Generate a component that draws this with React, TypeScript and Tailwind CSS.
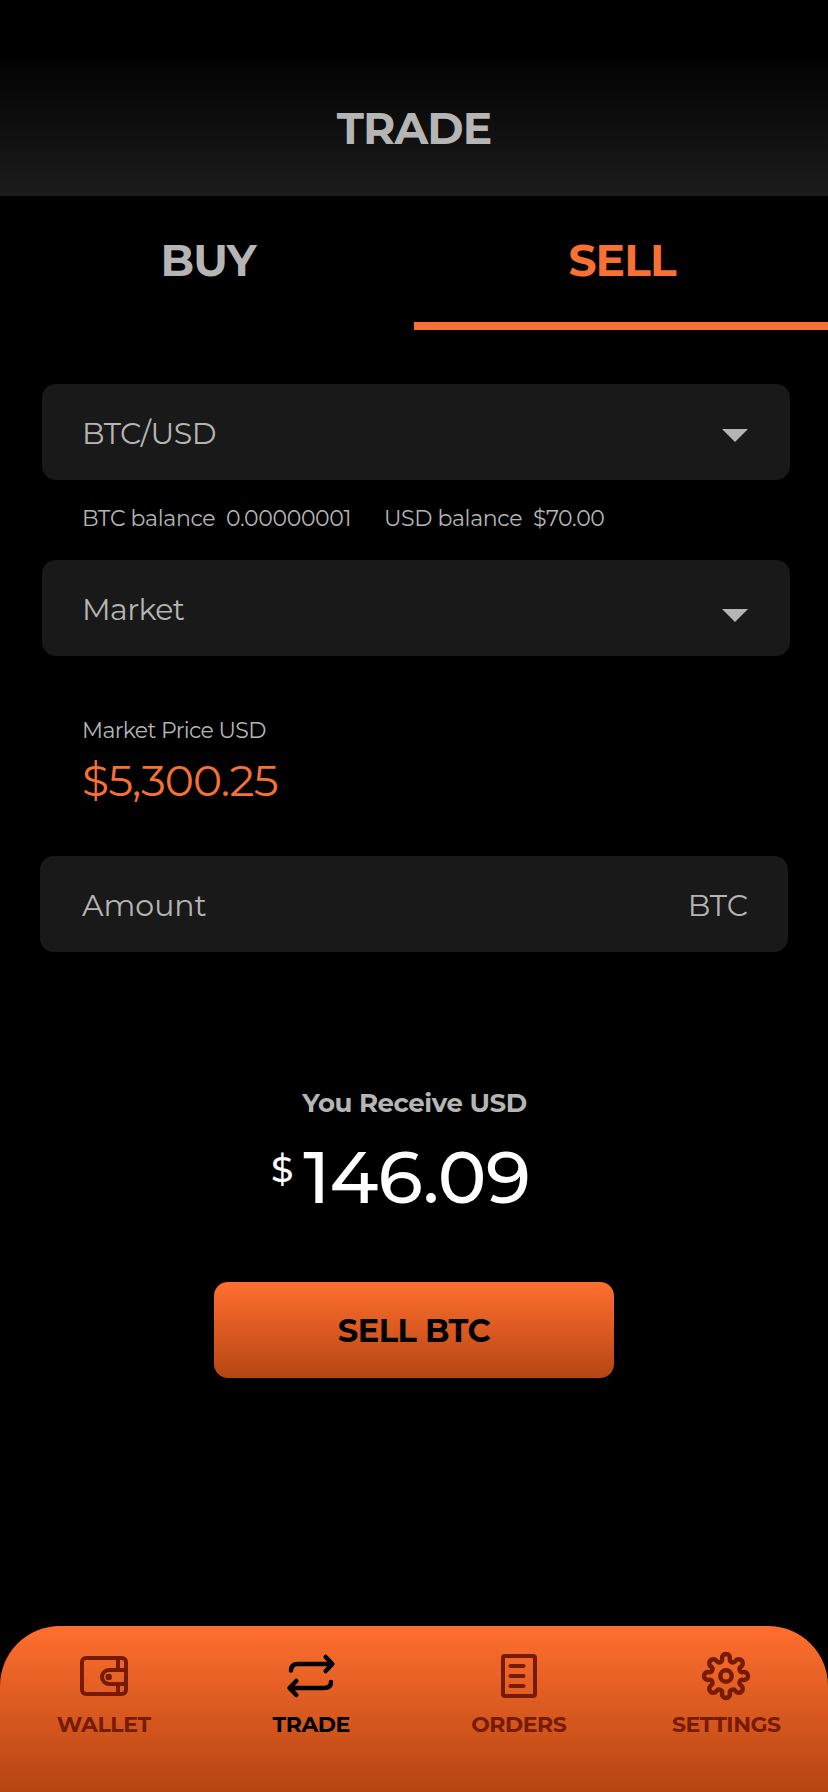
import { useState } from "react"
import type { ReactNode } from "react"

// Outline of the cog: eight round teeth joined by small concave arcs
const COG_PATH =
  Array.from({ length: 8 }, (_, i) => {
    const point = (deg: number) => {
      const a = (deg * Math.PI) / 180
      return `${(24 + 17.66 * Math.cos(a)).toFixed(2)} ${(24 + 17.66 * Math.sin(a)).toFixed(2)}`
    }
    const start = i * 45 - 12.83
    const end = i * 45 + 12.83
    return `${i === 0 ? `M${point(start)}` : ""}A4 4 0 1 1 ${point(end)}A3.02 3.02 0 0 0 ${point(start + 45)}`
  }).join("") + "Z"

const WalletIcon = (
  <>
    <rect x="2" y="6" width="44" height="36" rx="4" />
    <path d="M38 6v12M38 32v10M46 18H29a7 7 0 0 0 0 14h17" />
    <circle cx="28.7" cy="25" r="3.2" fill="currentColor" stroke="none" />
  </>
)

const TradeIcon = (
  <g strokeWidth="4.5">
    <path d="M4 18.500c0-4.500 2.500-6.500 7-6.500H45M38.700 5L45.300 12l-6.600 7" />
    <path d="M44 30c0 4-2.500 6-7 6H3M9.300 29L2.500 36l6.800 7" />
  </g>
)

const OrdersIcon = (
  <>
    <rect x="8" y="4" width="32" height="40" rx="2" />
    <path d="M15.500 14h13M15.500 24h13M15.500 34h13" />
  </>
)

const SettingsIcon = (
  <g strokeWidth="4.5">
    <path d={COG_PATH} />
    <circle cx="24" cy="24" r="5.7" />
  </g>
)

const NAV_ITEMS: { label: string; icon: ReactNode }[] = [
  { label: "WALLET", icon: WalletIcon },
  { label: "TRADE", icon: TradeIcon },
  { label: "ORDERS", icon: OrdersIcon },
  { label: "SETTINGS", icon: SettingsIcon },
]

function Caret({ className }: { className: string }) {
  return (
    <svg width="26" height="13" viewBox="0 0 26 13" className={className}>
      <path d="M0 0h26L13 13z" fill="#b5b5b5" />
    </svg>
  )
}

function Field({ className = "", children }: { className?: string; children: ReactNode }) {
  return (
    <div
      className={`flex h-24 w-[748px] items-center justify-between rounded-[14px] bg-[#191919] pt-1 text-[30px] ${className}`}
    >
      {children}
    </div>
  )
}

export default function App() {
  const [side, setSide] = useState("SELL")
  const [active, setActive] = useState("TRADE")

  return (
    <div className="flex h-[1792px] w-[828px] flex-col overflow-hidden bg-black font-['Montserrat','Inter',sans-serif] leading-none whitespace-nowrap text-[#b5b5b5]">
      <header className="flex h-[196px] shrink-0 items-center justify-center bg-linear-to-b/srgb from-black from-25% to-[#1c1c1c] pt-[60px]">
        <h1 className="text-[44px] font-bold tracking-[-0.02em]">TRADE</h1>
      </header>

      <div className="grid h-[134px] shrink-0 grid-cols-2">
        {["BUY", "SELL"].map((tab) => (
          <button
            key={tab}
            onClick={() => setSide(tab)}
            className={`border-b-8 pt-[2px] pl-[2px] text-[44px] font-bold tracking-[-0.02em] ${
              side === tab ? "border-[#f77133] text-[#f77133]" : "border-transparent"
            }`}
          >
            {tab}
          </button>
        ))}
      </div>

      <main className="flex flex-col pt-[54px] pl-[42px]">
        <Field className="pr-[42px] pl-10 tracking-[-0.016em]">
          <span>BTC/USD</span>
          <Caret className="mt-[3px]" />
        </Field>

        <div className="flex h-20 items-center pb-[2px] pl-10 text-[22px] tracking-[-0.016em]">
          <span className="w-[144px]">BTC balance</span>
          <span className="w-[158px]">0.00000001</span>
          <span className="w-[149px]">USD balance</span>
          <span>$70.00</span>
        </div>

        <Field className="pr-[42px] pl-10 tracking-[-0.018em]">
          <span>Market</span>
          <Caret className="mt-[11px]" />
        </Field>

        <div className="flex h-[200px] flex-col pt-[62px] pl-10">
          <span className="text-[22px] leading-[26px] tracking-[-0.028em]">Market Price USD</span>
          <span className="mt-3 text-[44px] leading-[48px] tracking-[-0.021em] text-[#f77133]">$5,300.25</span>
        </div>

        <Field className="-ml-0.5 pr-10 pl-[42px]">
          <span>Amount</span>
          <span>BTC</span>
        </Field>
      </main>

      <section className="flex flex-col items-center pt-[136px]">
        <p className="pl-px text-[26px] leading-[30px] font-bold tracking-[-0.016em]">You Receive USD</p>
        <div className="mt-[18px] mr-[27px] flex h-20 items-center text-white">
          <span className="mr-[10px] mb-[15px] text-[36px] font-medium">$</span>
          <span className="text-[73px] font-medium tracking-[-0.01em]">146.09</span>
        </div>
        <button className="mt-[66px] h-24 w-[400px] rounded-[14px] bg-linear-to-b/srgb from-[#ff6f2f] to-[#b64512] pt-px text-[32px] font-bold tracking-[-0.015em] text-black">
          SELL BTC
        </button>
      </section>

      <nav className="mt-auto h-[166px] shrink-0 rounded-t-[60px] bg-linear-to-b/srgb from-[#ff6f2f] to-[#b64512] pt-[26px]">
        <div className="-mr-0.5 grid grid-cols-4">
          {NAV_ITEMS.map((item) => (
            <button
              key={item.label}
              onClick={() => setActive(item.label)}
              className={`flex flex-col items-center ${active === item.label ? "text-black" : "text-[#761b00]"}`}
            >
              <svg
                width="48"
                height="48"
                viewBox="0 0 48 48"
                fill="none"
                stroke="currentColor"
                strokeWidth="4"
                strokeLinecap="round"
                strokeLinejoin="round"
                className="overflow-visible"
              >
                {item.icon}
              </svg>
              <span className="mt-[13px] text-[22px] leading-6 font-bold tracking-[-0.02em]">{item.label}</span>
            </button>
          ))}
        </div>
      </nav>
    </div>
  )
}
